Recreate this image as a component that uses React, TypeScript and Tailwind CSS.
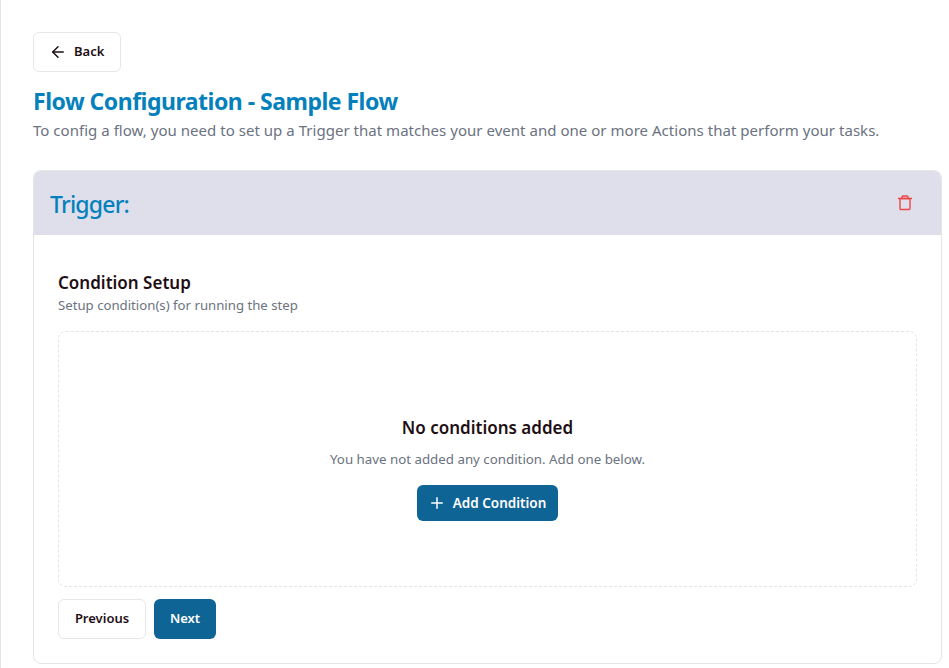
import { ArrowLeft, Plus } from 'lucide-react';

function Trash() {
  return (
    <svg width="16" height="16" viewBox="0 0 16 16" fill="none" stroke="#ef4444" strokeWidth="1.4">
      <path d="M1 3.5h14" />
      <path d="M5 3.5V2a1 1 0 0 1 1-1h4a1 1 0 0 1 1 1v1.5" />
      <rect x="3" y="3.5" width="10" height="11" rx="1" />
    </svg>
  );
}

export default function App() {
  return (
    <div className="h-[668px] overflow-hidden bg-white border-l border-[#e5e5e5] pl-[32px] pr-[7px] pt-[32px] [font-family:'Noto_Sans',sans-serif]">
      {/* Back */}
      <button className="flex items-center h-10 w-[88px] pl-[15px] gap-[7px] border border-[#e5e7eb] rounded-md bg-white text-[13px] font-semibold text-[#1f0f14]">
        <ArrowLeft size={18} strokeWidth={2} />
        Back
      </button>

      <h1 className="mt-[14px] text-[23px] leading-[30px] tracking-[-0.5px] font-bold text-[#0481bd]">Flow Configuration - Sample Flow</h1>
      <p className="mt-[3px] text-[15px] leading-[22px] tracking-[0.03px] text-[#6b7280]">
        To config a flow, you need to set up a Trigger that matches your event and one or more Actions that perform your tasks.
      </p>

      {/* Trigger card */}
      <div className="mt-[29px] h-[494px] border border-[#e5e5e5] rounded-lg overflow-hidden">
        <div className="flex items-center justify-between h-[64px] pl-4 pr-[28px] bg-[#dfdfec]">
          <h2 className="pt-[3px] text-[23px] tracking-[-0.8px] font-medium text-[#0481bd]">Trigger:</h2>
          <Trash />
        </div>
        <div className="px-6 pt-[36px]">
          <h3 className="text-[17px] leading-6 font-semibold text-[#1f0f14]">Condition Setup</h3>
          <p className="text-[13.2px] leading-5 text-[#6b7280]">Setup condition(s) for running the step</p>

          <div className="mt-4 h-[256px] flex flex-col items-center pt-[82px] border border-dashed border-[#e5e5e5] rounded-lg">
            <div className="text-[17px] leading-7 font-semibold text-[#1f0f14]">No conditions added</div>
            <p className="mt-[7px] text-[13.3px] leading-5 text-[#6b7280]">You have not added any condition. Add one below.</p>
            <button className="mt-4 flex items-center gap-[7px] h-9 pl-[11px] pr-3 rounded-md bg-[#0f6496] text-white text-[13.5px] font-semibold">
              <Plus size={18} />
              Add Condition
            </button>
          </div>

          <div className="mt-3 flex gap-2">
            <button className="h-10 w-[88px] border border-[#e5e7eb] rounded-md bg-white text-[13px] font-semibold text-[#1f0f14]">Previous</button>
            <button className="h-10 w-[62px] rounded-md bg-[#0f6496] text-white text-[13px] font-semibold">Next</button>
          </div>
        </div>
      </div>
    </div>
  );
}
